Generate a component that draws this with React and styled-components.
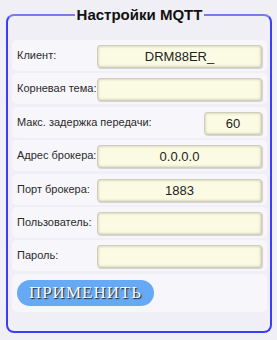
import React from "react";
import styled, { createGlobalStyle } from "styled-components";

const Global = createGlobalStyle`
  body {
    margin: 0;
    background: #efeff5;
    font-family: "Liberation Sans", Arial, sans-serif;
  }
`;

const Box = styled.fieldset`
  box-sizing: border-box;
  width: 266px;
  margin: 6px 0 0 6px;
  padding: 16px 3px 19px 4px;
  border: 2px solid #3c3cff;
  border-top-color: #7a7af0;
  border-radius: 8px;
`;

const Legend = styled.legend`
  margin: 0 auto;
  padding: 0 2px;
  font-size: 15px;
  font-weight: bold;
  line-height: 18px;
  color: #111;
`;

const Row = styled.div`
  display: flex;
  align-items: center;
  height: 31px;
  margin-bottom: 2.4px;
  padding: 0 5px;
  background: #f7f7fb;
  border-radius: 5px;
  justify-content: ${p => (p.$wide ? "space-between" : "flex-start")};
`;

const Label = styled.span`
  flex: ${p => (p.$wide ? "none" : "0 0 80px")};
  margin-top: -1px;
  font-size: 11px;
  color: #2a2a2a;
  white-space: nowrap;
`;

const Field = styled.input`
  box-sizing: border-box;
  flex: ${p => (p.$short ? "0 0 58px" : "1")};
  width: 0;
  height: 23px;
  margin-top: 2px;
  padding: 0;
  border: 1px solid #cfcfb8;
  border-radius: 3px;
  background: #fbfbe3;
  box-shadow: inset 0 0 3px rgba(0, 0, 0, 0.25), 1px 1px 1px rgba(0, 0, 0, 0.15);
  font-family: "Liberation Sans", Arial, sans-serif;
  font-size: 13px;
  color: #222;
  text-align: center;
  outline: 0;
`;

const ButtonRow = styled.div`
  display: flex;
  align-items: center;
  height: 38px;
  padding: 0 5px;
  background: #f7f7fb;
  border-radius: 5px;
`;

const Apply = styled.button`
  width: 137px;
  height: 26px;
  margin-top: 1px;
  border: 0;
  border-radius: 13px;
  background: #66aaf6;
  font-family: "Liberation Serif", "Times New Roman", serif;
  font-size: 17px;
  letter-spacing: 1px;
  color: #f8f8f8;
  text-shadow: 1px 1px 1px #222;
  cursor: pointer;
`;

const fields = [
  { label: "Клиент:", value: "DRM88ER_" },
  { label: "Корневая тема:", value: "" },
  { label: "Макс. задержка передачи:", value: "60", short: true },
  { label: "Адрес брокера:", value: "0.0.0.0" },
  { label: "Порт брокера:", value: "1883" },
  { label: "Пользователь:", value: "" },
  { label: "Пароль:", value: "" }
];

export default function App() {
  return (
    <>
      <Global />
      <Box>
        <Legend>Настройки MQTT</Legend>
        {fields.map(f => (
          <Row key={f.label} $wide={f.short}>
            <Label $wide={f.short}>{f.label}</Label>
            <Field $short={f.short} defaultValue={f.value} />
          </Row>
        ))}
        <ButtonRow>
          <Apply>ПРИМЕНИТЬ</Apply>
        </ButtonRow>
      </Box>
    </>
  );
}
